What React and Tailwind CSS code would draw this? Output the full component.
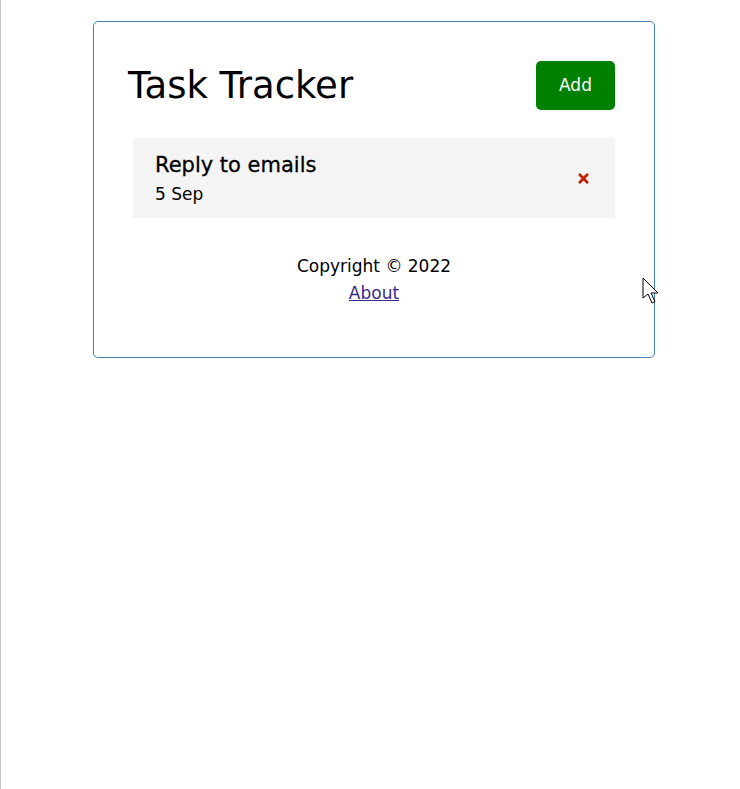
import React from "react";
import { FaTimes } from "react-icons/fa";

const tasks = [{ id: 1, text: "Reply to emails", day: "5 Sep" }];

const Task = ({ task }) => (
  <div className="m-[5px] flex items-center justify-between bg-[#f4f4f4] py-[10px] pl-[22px] pr-[20px]">
    <div>
      <h3 className="pt-[2px] text-[21px] font-normal leading-[31px] text-black [-webkit-text-stroke:0.3px_black]">
        {task.text}
      </h3>
      <p className="text-[17px] leading-[27px] text-black">{task.day}</p>
    </div>
    <FaTimes className="mr-[4px] h-[15px] w-[15px] text-[#c41e00]" />
  </div>
);

export default function App() {
  return (
    <div
      className="relative min-h-[789px] w-full border-l border-[#c8c8c8] bg-white pt-[21px]"
      style={{ fontFamily: "'DejaVu Sans', 'Open Sans', sans-serif" }}
    >
      {/* Card */}
      <div className="ml-[92px] h-[337px] w-[562px] rounded-[5px] border border-[#4682b4] p-[34px]">
        <header className="mb-[23px] flex items-center justify-between">
          <h1 className="text-[37px] font-normal leading-[40px] text-black">Task Tracker</h1>
          <button className="m-[5px] h-[49px] w-[79px] rounded-[5px] bg-[#008000] text-[17px] text-white">
            Add
          </button>
        </header>

        {tasks.map((t) => (
          <Task key={t.id} task={t} />
        ))}

        <footer className="mt-[35px] text-center text-[17px] leading-[27px] text-black">
          <p>Copyright © 2022</p>
          <a href="#" className="text-[#3a2a8c] underline">
            About
          </a>
        </footer>
      </div>

      {/* Mouse cursor */}
      <svg className="absolute left-[641px] top-[277px]" width="18" height="29" viewBox="0 0 18 29">
        <path
          d="M1 1 L1 21 L6 17 L10 26 L13 24.5 L9 16 L16 16 Z"
          fill="#fff"
          stroke="#000"
          strokeWidth="1"
          strokeLinejoin="round"
        />
      </svg>
    </div>
  );
}
